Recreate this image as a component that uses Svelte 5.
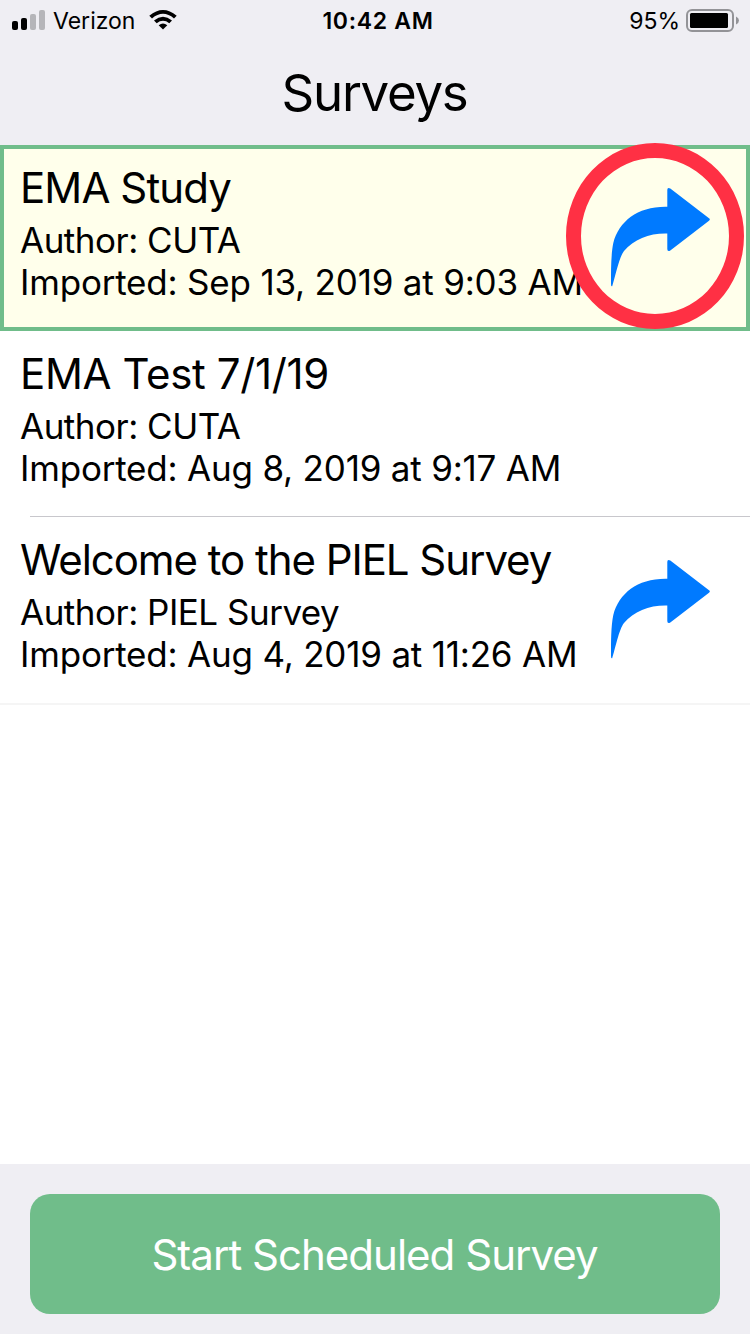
<script>
  const surveys = [
    { title: 'EMA Study', author: 'CUTA', imported: 'Sep 13, 2019 at 9:03 AM', tracking: -0.9, share: true, selected: true },
    { title: 'EMA Test 7/1/19', author: 'CUTA', imported: 'Aug 8, 2019 at 9:17 AM', tracking: -0.35, share: false, selected: false },
    { title: 'Welcome to the PIEL Survey', author: 'PIEL Survey', imported: 'Aug 4, 2019 at 11:26 AM', tracking: -1.05, share: true, selected: false }
  ];
</script>

<div class="screen">
  <header>
    <div class="status">
      <div class="carrier">
        <svg width="34" height="20" viewBox="0 0 34 20">
          <rect x="0" y="11" width="6" height="9" rx="2" />
          <rect x="9" y="8" width="6" height="12" rx="2" />
          <rect x="18" y="4" width="6" height="16" rx="2" fill="#b5b5b9" />
          <rect x="27" y="0" width="6" height="20" rx="2" fill="#b5b5b9" />
        </svg>
        <span class="network">Verizon</span>
        <svg class="wifi" width="28" height="20" viewBox="0 0 28 20">
          <path d="M0.300 5.700Q14 -5.700 27.700 5.700L25 8.400Q14 -0.700 3 8.400Z" />
          <path d="M5 10.500Q14 3.200 23 10.500L20.300 13.200Q14 8.300 7.700 13.200Z" />
          <path d="M9.700 15.200Q14 12 18.300 15.200L14 19.500Z" />
        </svg>
      </div>
      <span class="time">10:42 AM</span>
      <div class="power">
        <span>95%</span>
        <svg width="54" height="24" viewBox="0 0 54 24">
          <rect x="1" y="1" width="46" height="21" rx="5" fill="none" stroke="#939397" stroke-width="2" />
          <rect x="4" y="4" width="38" height="15" rx="1.5" />
          <path d="M50 7.500Q53 9 53 11.500T50 15.500Z" fill="#939397" />
        </svg>
      </div>
    </div>
    <h1>Surveys</h1>
  </header>

  <main>
    {#each surveys as survey}
      <section class:selected={survey.selected}>
        <div class="details">
          <h2 style="letter-spacing: {survey.tracking}px">{survey.title}</h2>
          <p class="author">Author: {survey.author}</p>
          <p>Imported: {survey.imported}</p>
        </div>
        {#if survey.share}
          <button aria-label="Share survey">
            <svg width="100" height="100" viewBox="0 0 100 100">
              <path d="M56.300 2Q56.300 -1 59.300 0.500L98 30.300Q99.700 31.500 98 32.700L59.300 62.500Q56.300 64 56.300 61V45.500C39 45 23 51 13 63C8 69 4 90 1.200 98.200Q0 99 0 96C0 82 0 66 2.300 55C8 33 27 18 56.300 18.700Z" />
            </svg>
          </button>
        {/if}
        {#if survey.selected}
          <div class="ring"></div>
        {/if}
      </section>
    {/each}
  </main>

  <footer>
    <button class="start">Start Scheduled Survey</button>
  </footer>
</div>

<style>
  :global(body) {
    margin: 0;
  }

  .screen {
    display: flex;
    flex-direction: column;
    height: 1334px;
    background: #fff;
    color: #000;
    font-family: Inter, sans-serif;
  }

  header {
    height: 145px;
    background: #efeef3;
  }

  .status {
    display: grid;
    grid-template-columns: 1fr auto 1fr;
    align-items: center;
    height: 41px;
    padding: 0 10px 0 12px;
    font-size: 23px;
  }

  .carrier,
  .power {
    display: flex;
    align-items: center;
  }

  .carrier svg {
    margin-bottom: 2px;
  }

  .network {
    margin: 0 14px 0 7px;
  }

  .power {
    justify-content: flex-end;
    gap: 6px;
  }

  .time {
    padding-left: 4px;
    font-weight: 600;
    letter-spacing: 0.7px;
  }

  h1 {
    margin: 19px 0 0;
    font-size: 51px;
    font-weight: 400;
    line-height: 66px;
    letter-spacing: -1.3px;
    text-indent: -1px;
    text-align: center;
  }

  main {
    flex: 1;
  }

  section {
    position: relative;
    display: flex;
    justify-content: space-between;
    align-items: flex-start;
    box-sizing: border-box;
    height: 186px;
    padding: 18px 39px 0 20px;
  }

  section + section::after {
    content: '';
    position: absolute;
    right: 0;
    bottom: 0;
    left: 30px;
    height: 1px;
    background: #c8c7cc;
  }

  section:last-child::after {
    bottom: -2px;
    left: 0;
    height: 2px;
    background: #f5f5f5;
  }

  .selected {
    border: 4px solid #70bd8a;
    background: #ffffeb;
    padding: 14px 35px 0 16px;
  }

  .details {
    width: 0;
  }

  h2,
  p {
    margin: 0;
    font-weight: 400;
    white-space: nowrap;
  }

  h2 {
    margin-bottom: 6px;
    font-size: 42px;
    line-height: 50px;
  }

  p {
    font-size: 35px;
    line-height: 42px;
    letter-spacing: -0.2px;
  }

  .author {
    letter-spacing: -0.5px;
  }

  section button {
    flex: none;
    margin-top: 25px;
    border: 0;
    padding: 0;
    background: none;
  }

  section svg {
    display: block;
    fill: #007aff;
  }

  .ring {
    position: absolute;
    top: -6px;
    right: 2px;
    box-sizing: border-box;
    width: 178px;
    height: 186px;
    border: 15px solid #ff3044;
    border-radius: 50%;
  }

  footer {
    box-sizing: border-box;
    height: 170px;
    padding: 30px 30px 20px;
    background: #efeef3;
  }

  .start {
    width: 100%;
    height: 120px;
    border: 0;
    border-radius: 20px;
    background: #70bd8a;
    color: #fff;
    font: 42px Inter, sans-serif;
    letter-spacing: -0.98px;
    text-indent: -1px;
  }
</style>
